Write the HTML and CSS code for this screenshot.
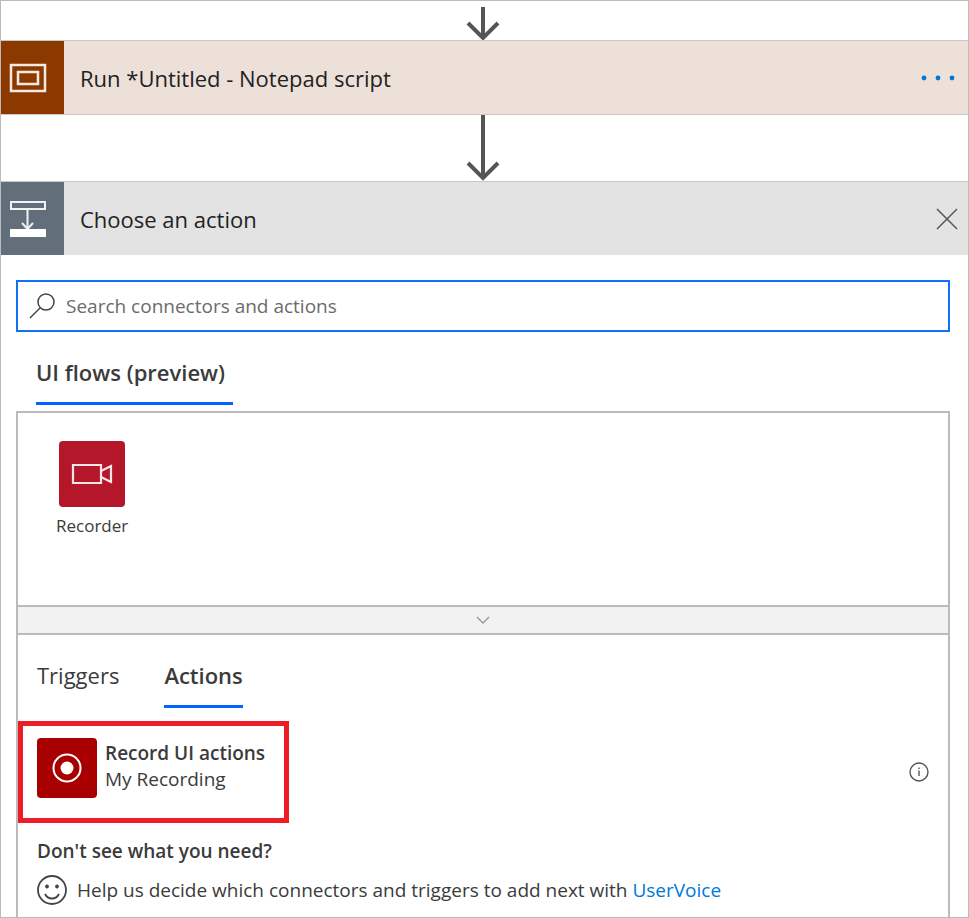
FILE: index.html
```html
<!DOCTYPE html>
<html lang="en">
<head>
<meta charset="utf-8">
<meta name="viewport" content="width=device-width, initial-scale=1">
<title>Choose an action</title>
<link rel="stylesheet" href="styles.css">
</head>
<body>
<main class="flow">
  <div class="connector">
    <svg width="34" height="34" viewBox="0 0 34 34" aria-hidden="true"><path d="M17 0V31M2 16L17 31L32 16"/></svg>
  </div>
  <section class="card card-script">
    <div class="card-icon">
      <svg width="38" height="30" viewBox="0 0 38 30" fill="none" stroke="#f6eae4" stroke-width="2.500" aria-hidden="true"><path d="M2 2H36V28H2Z"/><path d="M9 9H29V21H9Z"/></svg>
    </div>
    <h2 class="card-title">Run *Untitled - Notepad script</h2>
    <button class="icon-button more" type="button" aria-label="More commands">
      <svg width="36" height="6" viewBox="0 0 36 6" fill="#0078d7" aria-hidden="true"><circle cx="4" cy="3" r="2.400"/><circle cx="18" cy="3" r="2.400"/><circle cx="32" cy="3" r="2.400"/></svg>
    </button>
  </section>
  <div class="connector connector-long">
    <svg width="34" height="66" viewBox="0 0 34 66" aria-hidden="true"><path d="M17 0V63M2 48L17 63L32 48"/></svg>
  </div>
  <section class="card card-choose">
    <div class="card-icon">
      <svg width="38" height="38" viewBox="0 0 38 38" fill="none" stroke="#f0f2f4" stroke-width="2" aria-hidden="true"><path d="M2 2H36V9H2Z"/><path d="M18.500 9V29M13 23L18.500 29L24 23"/><path d="M1 29H37V37H1Z" fill="#fff" stroke="none"/></svg>
    </div>
    <h2 class="card-title">Choose an action</h2>
    <button class="icon-button close" type="button" aria-label="Close">
      <svg width="22" height="22" viewBox="0 0 22 22" fill="none" stroke="#555" stroke-width="1.500" aria-hidden="true"><path d="M1 1L21 21M21 1L1 21"/></svg>
    </button>
  </section>
  <div class="picker">
    <label class="search">
      <svg width="26" height="26" viewBox="0 0 26 26" fill="none" stroke="#444" stroke-width="1.500" aria-hidden="true"><circle cx="17" cy="9" r="8"/><path d="M11 15L1 25"/></svg>
      <input type="text" placeholder="Search connectors and actions" aria-label="Search connectors and actions">
    </label>
    <nav class="tabs group-tabs"><button class="tab active" type="button">UI flows (preview)</button></nav>
    <div class="panel">
      <div class="connectors">
        <button class="connector-tile" type="button">
          <span class="tile-icon">
            <svg width="42" height="22" viewBox="0 0 42 22" fill="none" stroke="#f9e4e7" stroke-width="2.200" aria-hidden="true"><path d="M2 2H30V20H2Z"/><path d="M30 8L40 3V19L30 14"/></svg>
          </span>
          <span>Recorder</span>
        </button>
      </div>
      <button class="collapse" type="button" aria-label="Collapse connectors">
        <svg width="14" height="8" viewBox="0 0 14 8" fill="none" stroke="#999" stroke-width="1.400" aria-hidden="true"><path d="M1 1L7 7L13 1"/></svg>
      </button>
      <div class="operations">
        <nav class="tabs operation-tabs">
          <button class="tab" type="button">Triggers</button>
          <button class="tab active" type="button">Actions</button>
        </nav>
        <div class="operation-row">
          <button class="operation" type="button">
            <span class="operation-icon">
              <svg width="30" height="30" viewBox="0 0 30 30" aria-hidden="true"><circle cx="15" cy="15" r="13.500" fill="none" stroke="#fff" stroke-width="2"/><circle cx="15" cy="15" r="6.500" fill="#fff"/></svg>
            </span>
            <span class="operation-text"><strong>Record UI actions</strong><span>My Recording</span></span>
          </button>
          <button class="icon-button info" type="button" aria-label="Details">
            <svg width="20" height="20" viewBox="0 0 20 20" fill="none" stroke="#555" stroke-width="1.400" aria-hidden="true"><circle cx="10" cy="10" r="9"/><path d="M10 8.500V14M10 5.500V7"/></svg>
          </button>
        </div>
        <h3 class="help-title">Don't see what you need?</h3>
        <p class="help">
          <svg width="30" height="30" viewBox="0 0 30 30" fill="none" stroke="#444" stroke-width="1.800" aria-hidden="true"><circle cx="15" cy="15" r="14"/><path d="M8 19C11 25 19 25 22 19"/><circle cx="10" cy="11.500" r="1" fill="#444"/><circle cx="20" cy="11.500" r="1" fill="#444"/></svg>
          <span>Help us decide which connectors and triggers to add next with <a href="#">UserVoice</a></span>
        </p>
      </div>
    </div>
  </div>
</main>
</body>
</html>
```
FILE: styles.css
```css
* {
  box-sizing: border-box;
}

body {
  margin: 0;
  font-family: "Open Sans", "Noto Sans", sans-serif;
  font-size: 19px;
  line-height: 26px;
  color: #3b3b3b;
  background: #fff;
}

button,
input {
  font: inherit;
  color: inherit;
  padding: 0;
  border: 0;
  background: none;
}

svg {
  display: block;
  flex: none;
}

h2,
h3,
p {
  margin: 0;
}

.flow {
  display: flex;
  flex-direction: column;
  min-height: 100vh;
  border: 1px solid #bbb;
}

.connector {
  display: flex;
  justify-content: center;
  height: 39px;
  padding-top: 6px;
  padding-right: 3px;
}

.connector-long {
  height: 66px;
  padding-top: 0;
}

.connector svg {
  fill: none;
  stroke: #555;
  stroke-width: 4;
}

.card {
  display: flex;
  align-items: center;
  height: 74px;
  border-top: 1px solid #c8c8c8;
}

.card-script {
  height: 75px;
  border-bottom: 1px solid #c8c8c8;
  background: #ede0d8;
}

.card-choose {
  background: #e3e3e3;
}

.card-icon {
  display: flex;
  align-items: center;
  align-self: stretch;
  width: 63px;
  padding-left: 8px;
  background: #8c3900;
}

.card-choose .card-icon {
  background: #626f7b;
}

.card-title {
  flex: 1;
  padding-left: 16px;
  font-size: 22px;
  font-weight: 400;
  color: #222;
}

.icon-button {
  display: grid;
  place-items: center;
  cursor: pointer;
}

.more {
  margin-right: 12px;
}

.close {
  margin-right: 10px;
}

.picker {
  flex: 1;
  display: flex;
  flex-direction: column;
  padding: 25px 18px 0 15px;
}

.search {
  display: flex;
  align-items: center;
  gap: 11px;
  height: 52px;
  padding: 0 11px;
  border: 2px solid #1071f5;
}

.search input {
  flex: 1;
  min-width: 0;
  height: 32px;
  outline: 0;
}

.search input::placeholder {
  color: #6b6b6b;
  opacity: 1;
}

.tabs {
  display: flex;
}

.tab {
  height: 48px;
  padding-bottom: 15px;
  border-bottom: 3px solid transparent;
  font-size: 22px;
  line-height: 28px;
  cursor: pointer;
}

.tab.active {
  border-color: #0064ff;
  font-weight: 600;
}

.group-tabs {
  padding: 25px 20px 6px;
}

.group-tabs .tab {
  padding-right: 8px;
}

.panel {
  flex: 1;
  display: flex;
  flex-direction: column;
  border: 2px solid #bbb;
  border-bottom: 0;
}

.connectors {
  height: 192px;
  padding: 28px 38px;
}

.connector-tile {
  display: flex;
  flex-direction: column;
  align-items: center;
  gap: 7px;
  font-size: 17px;
  line-height: 24px;
  cursor: pointer;
}

.tile-icon {
  display: grid;
  place-items: center;
  width: 66px;
  height: 66px;
  border-radius: 4px;
  background: #b41729;
}

.collapse {
  display: grid;
  place-items: center;
  height: 30px;
  border: solid #bbb;
  border-width: 2px 0;
  background: #f2f2f2;
  cursor: pointer;
}

.operations {
  padding-top: 25px;
}

.operation-tabs {
  gap: 45px;
  padding: 0 19px;
}

.operation-row {
  display: flex;
  align-items: center;
  justify-content: space-between;
  margin-top: 13px;
  padding-right: 19px;
}

.operation {
  display: flex;
  gap: 8px;
  width: 271px;
  height: 102px;
  padding: 12px 14px;
  border: 5px solid #ee1c24;
  text-align: left;
  cursor: pointer;
}

.operation-icon {
  display: grid;
  place-items: center;
  width: 60px;
  height: 60px;
  border-radius: 4px;
  background: #a80000;
}

.operation-text {
  display: flex;
  flex-direction: column;
  padding-top: 2px;
}

.operation-text strong {
  font-weight: 600;
}

.help-title {
  margin: 15px 19px 0;
  font-size: 19px;
  font-weight: 600;
}

.help {
  display: flex;
  align-items: center;
  gap: 10px;
  margin: 11px 19px;
}

.help a {
  color: #0078d7;
  text-decoration: none;
}
```
